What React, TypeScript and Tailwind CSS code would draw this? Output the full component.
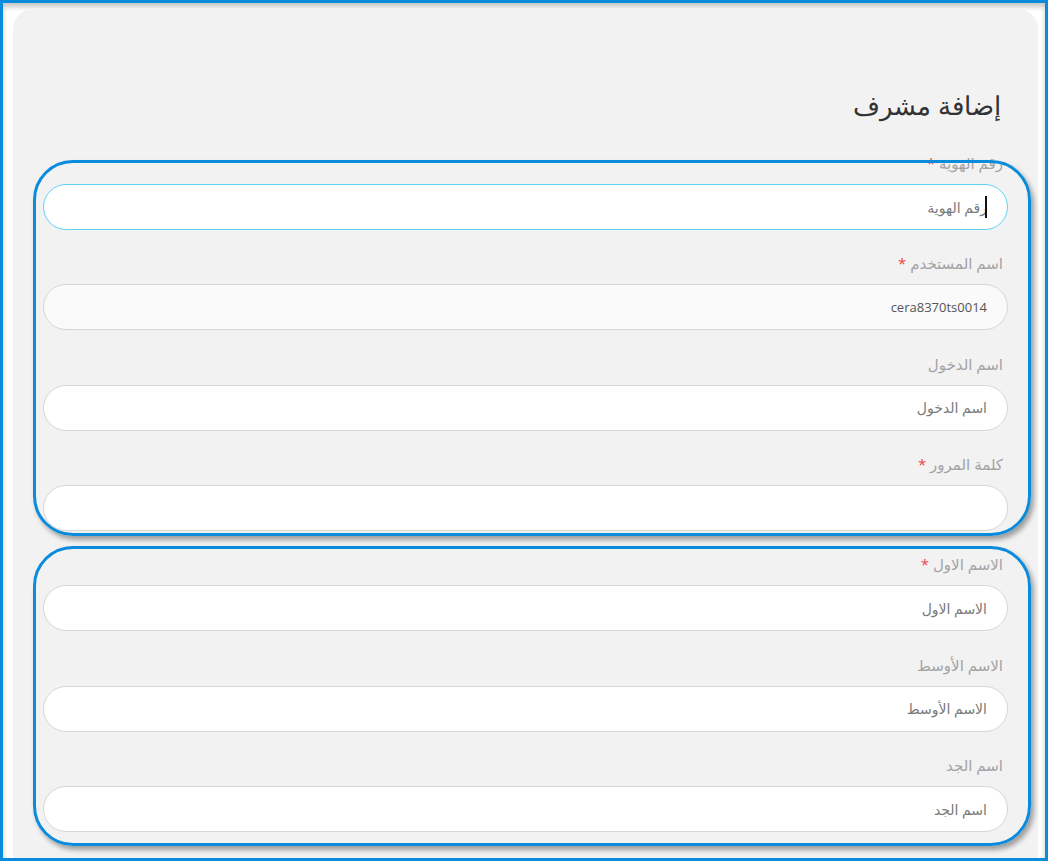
const fields = [
  { label: 'رقم الهوية', required: true, placeholder: 'رقم الهوية', focused: true },
  { label: 'اسم المستخدم', required: true, value: 'cera8370ts0014', readOnly: true },
  { label: 'اسم الدخول', required: false, placeholder: 'اسم الدخول' },
  { label: 'كلمة المرور', required: true, placeholder: '' },
  { label: 'الاسم الاول', required: true, placeholder: 'الاسم الاول' },
  { label: 'الاسم الأوسط', required: false, placeholder: 'الاسم الأوسط' },
  { label: 'اسم الجد', required: false, placeholder: 'اسم الجد' },
];

type Field = (typeof fields)[number] & { value?: string; readOnly?: boolean; focused?: boolean };

function FormField({ field }: { field: Field }) {
  return (
    <div className="flex flex-col">
      <label className="pr-[5px] text-[15px] leading-[20px] text-[#a3a3a3]">
        {field.label}
        {field.required && <span className="text-[#ef4444]"> *</span>}
      </label>
      <div
        className={`relative mt-[11px] flex h-[46px] items-center rounded-full border px-[20px] text-[14px] ${
          field.focused
            ? 'border-[#5fd3f3] bg-white'
            : field.readOnly
              ? 'border-[#d6d6d6] bg-[#fafafa]'
              : 'border-[#d6d6d6] bg-white'
        }`}
      >
        {field.value ? (
          <span className="text-[13px] text-[#555]">{field.value}</span>
        ) : (
          <span className="text-[#7a7a7a]">{field.placeholder}</span>
        )}
        {field.focused && (
          <span className="absolute right-[20px] top-[11px] h-[22px] w-[2px] bg-[#111]" />
        )}
      </div>
      <div className="h-[23.35px]" />
    </div>
  );
}

export default function App() {
  return (
    <div
      dir="rtl"
      className="relative h-[861px] w-[1048px] overflow-hidden border-[3px] border-[#0b8bdb] bg-white shadow-[inset_0_4px_5px_rgba(0,0,0,0.22)]"
      style={{ fontFamily: '"Open Sans", "Noto Sans", "DejaVu Sans", sans-serif' }}
    >
      <div className="relative mr-[7px] ml-[10px] mt-[6px] h-[900px] rounded-t-[20px] bg-[#f2f2f2] px-[30px] pt-[80px]">
        <h2 className="pr-[7px] text-[26px] leading-[32px] font-light text-[#333]">إضافة مشرف</h2>
        <div className="mt-[32px] flex flex-col">
          {fields.map((f, i) => (
            <FormField key={i} field={f as Field} />
          ))}
        </div>

        {/* annotation boxes */}
        <div className="pointer-events-none absolute left-[20px] top-[151px] h-[376px] w-[998px] rounded-[40px] border-[3px] border-[#0b8bdb] shadow-[3px_4px_5px_rgba(0,0,0,0.35)]" />
        <div className="pointer-events-none absolute left-[20px] top-[537px] h-[300px] w-[998px] rounded-[40px] border-[3px] border-[#0b8bdb] shadow-[3px_4px_5px_rgba(0,0,0,0.35)]" />
      </div>
    </div>
  );
}
